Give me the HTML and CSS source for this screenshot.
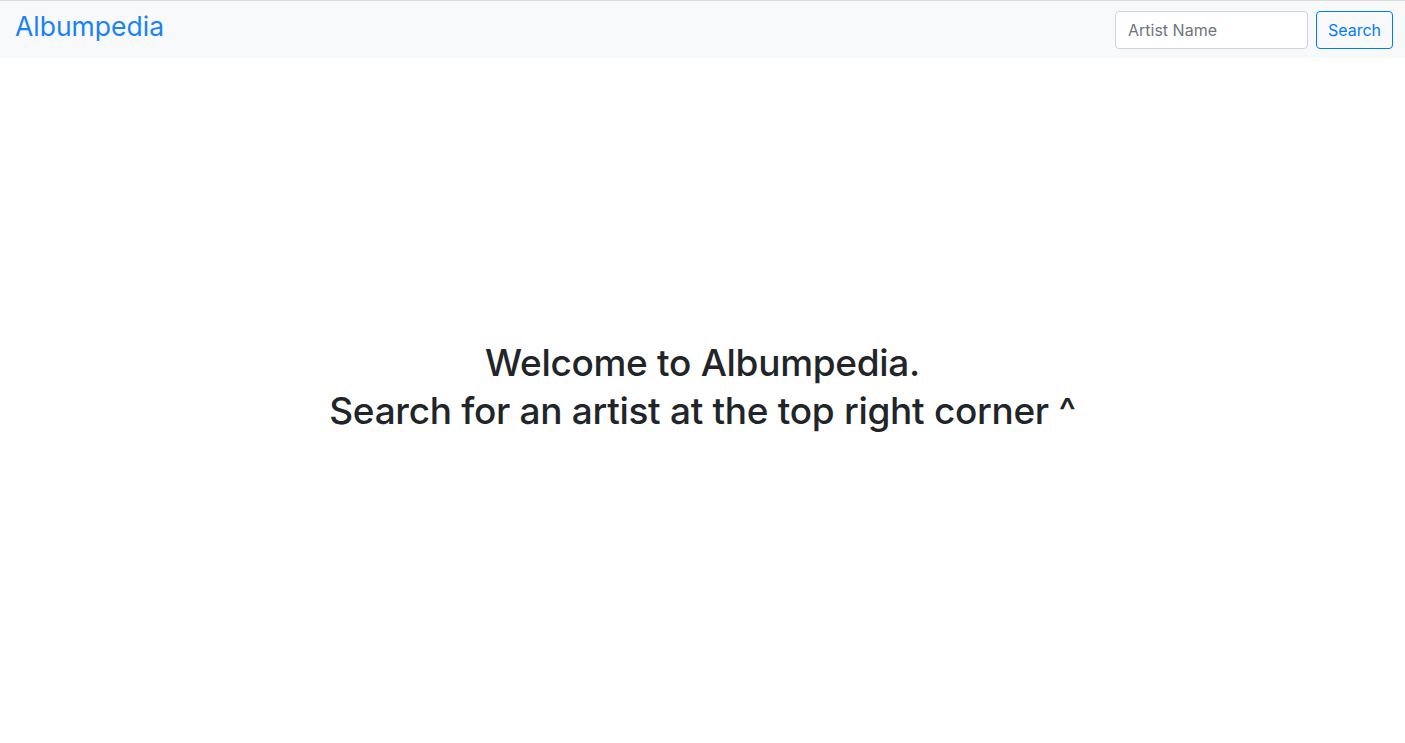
FILE: index.html
```html
<!DOCTYPE html>
<html>
<head>
<meta charset="utf-8">
<link rel="stylesheet" href="styles.css">
</head>
<body>
<nav class="navbar">
  <a class="brand" href="#">Albumpedia</a>
  <form class="search">
    <input class="search-input" type="text" placeholder="Artist Name">
    <button class="search-btn" type="button">Search</button>
  </form>
</nav>
<main class="hero">
  <h1 class="hero-title">Welcome to Albumpedia.<br>Search for an artist at the top right corner ^</h1>
</main>
</body>
</html>
```

FILE: styles.css
```css
html, body {
  margin: 0;
  padding: 0;
  height: 100%;
}
body {
  font-family: Inter, "Liberation Sans", sans-serif;
  color: #212529;
  background: #fff;
  border-top: 1px solid #dcdcdc;
  box-sizing: border-box;
  display: flex;
  flex-direction: column;
}
.navbar {
  background: #f8f9fa;
  height: 57px;
  display: flex;
  align-items: center;
  justify-content: space-between;
  padding: 0 12px 0 15px;
  box-sizing: border-box;
}
.brand {
  color: #1a82f7;
  text-decoration: none;
  font-size: 26.5px;
  line-height: 1;
  margin-top: -7px;
}
.search {
  display: flex;
  gap: 8px;
  margin: 0;
}
.search-input {
  width: 193px;
  height: 38px;
  box-sizing: border-box;
  border: 1px solid #ced4da;
  border-radius: 4px;
  padding: 0 12px;
  font-family: inherit;
  font-size: 16px;
  color: #495057;
  background: #fff;
}
.search-input::placeholder {
  color: #6c757d;
}
.search-btn {
  width: 77px;
  height: 38px;
  box-sizing: border-box;
  border: 1px solid #007bff;
  border-radius: 4px;
  background: transparent;
  color: #007bff;
  font-family: inherit;
  font-size: 16px;
  padding: 0;
}
.hero {
  flex: 1;
  display: flex;
  justify-content: center;
  align-items: flex-start;
  padding-top: 281px;
}
.hero-title {
  margin: 0;
  font-weight: 500;
  font-size: 37px;
  line-height: 48px;
  text-align: center;
  letter-spacing: -0.3px;
}
```
